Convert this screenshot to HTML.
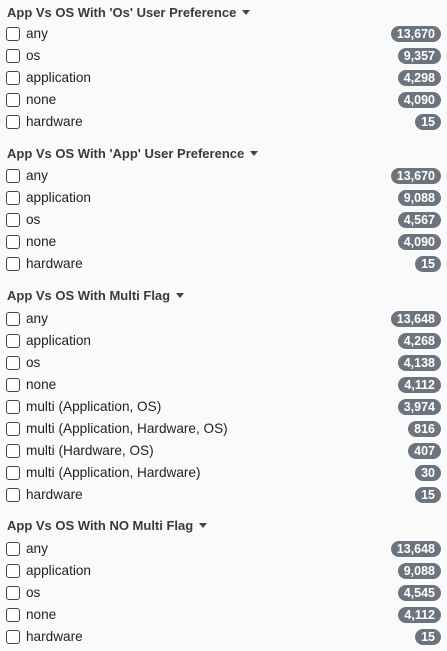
<!DOCTYPE html>
<html><head><style>
body{margin:0;width:447px;height:651px;background:#fafafa;font-family:"Liberation Sans",Arial,sans-serif;position:relative;overflow:hidden}
.h{position:absolute;left:7px;font-size:13px;font-weight:bold;color:#3a3a3a;line-height:16px;margin-top:-8px;white-space:nowrap}
.h:after{content:"";display:inline-block;margin-left:6px;vertical-align:2px;border-left:4px solid transparent;border-right:4px solid transparent;border-top:5px solid #444}
.r{position:absolute;left:0;width:447px;height:16px;margin-top:-8px}
.cb{position:absolute;left:6px;top:1px;width:12px;height:12px;border:1px solid #444;border-radius:3px;background:#fff}
.t{position:absolute;left:26px;top:0;font-size:13.6px;line-height:16px;color:#222}
.b{position:absolute;right:6px;top:0;height:16px;line-height:16px;padding:0 6px;border-radius:8px;background:#6c757e;color:#fff;font-size:12.5px;font-weight:bold}
</style></head><body>
<div class="h" style="top:13px">App Vs OS With 'Os' User Preference</div>
<div class="r" style="top:34px"><div class="cb"></div><div class="t">any</div><div class="b">13,670</div></div>
<div class="r" style="top:56px"><div class="cb"></div><div class="t">os</div><div class="b">9,357</div></div>
<div class="r" style="top:78px"><div class="cb"></div><div class="t">application</div><div class="b">4,298</div></div>
<div class="r" style="top:100px"><div class="cb"></div><div class="t">none</div><div class="b">4,090</div></div>
<div class="r" style="top:122px"><div class="cb"></div><div class="t">hardware</div><div class="b">15</div></div>

<div class="h" style="top:154px">App Vs OS With 'App' User Preference</div>
<div class="r" style="top:176px"><div class="cb"></div><div class="t">any</div><div class="b">13,670</div></div>
<div class="r" style="top:198px"><div class="cb"></div><div class="t">application</div><div class="b">9,088</div></div>
<div class="r" style="top:220px"><div class="cb"></div><div class="t">os</div><div class="b">4,567</div></div>
<div class="r" style="top:242px"><div class="cb"></div><div class="t">none</div><div class="b">4,090</div></div>
<div class="r" style="top:264px"><div class="cb"></div><div class="t">hardware</div><div class="b">15</div></div>

<div class="h" style="top:296px">App Vs OS With Multi Flag</div>
<div class="r" style="top:319px"><div class="cb"></div><div class="t">any</div><div class="b">13,648</div></div>
<div class="r" style="top:341px"><div class="cb"></div><div class="t">application</div><div class="b">4,268</div></div>
<div class="r" style="top:363px"><div class="cb"></div><div class="t">os</div><div class="b">4,138</div></div>
<div class="r" style="top:385px"><div class="cb"></div><div class="t">none</div><div class="b">4,112</div></div>
<div class="r" style="top:407px"><div class="cb"></div><div class="t">multi (Application, OS)</div><div class="b">3,974</div></div>
<div class="r" style="top:429px"><div class="cb"></div><div class="t">multi (Application, Hardware, OS)</div><div class="b">816</div></div>
<div class="r" style="top:451px"><div class="cb"></div><div class="t">multi (Hardware, OS)</div><div class="b">407</div></div>
<div class="r" style="top:473px"><div class="cb"></div><div class="t">multi (Application, Hardware)</div><div class="b">30</div></div>
<div class="r" style="top:495px"><div class="cb"></div><div class="t">hardware</div><div class="b">15</div></div>

<div class="h" style="top:526px">App Vs OS With NO Multi Flag</div>
<div class="r" style="top:549px"><div class="cb"></div><div class="t">any</div><div class="b">13,648</div></div>
<div class="r" style="top:571px"><div class="cb"></div><div class="t">application</div><div class="b">9,088</div></div>
<div class="r" style="top:593px"><div class="cb"></div><div class="t">os</div><div class="b">4,545</div></div>
<div class="r" style="top:615px"><div class="cb"></div><div class="t">none</div><div class="b">4,112</div></div>
<div class="r" style="top:637px"><div class="cb"></div><div class="t">hardware</div><div class="b">15</div></div>
</body></html>
